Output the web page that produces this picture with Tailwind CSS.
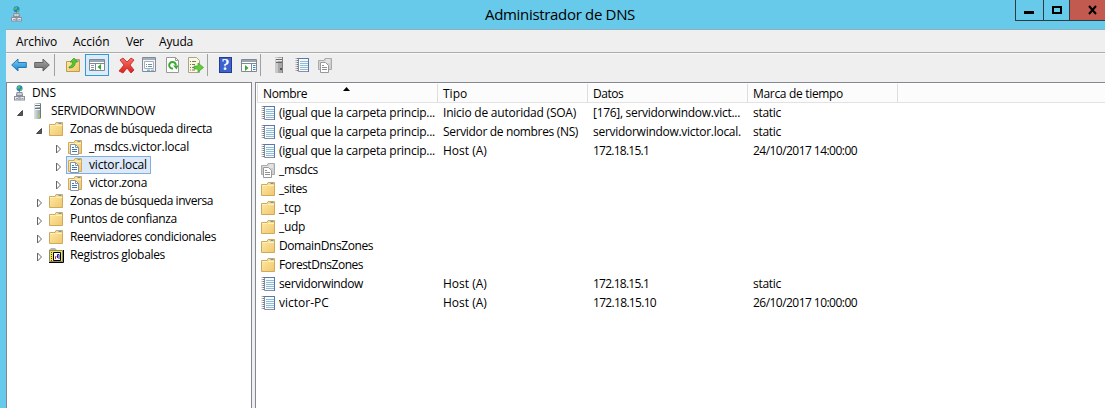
<!DOCTYPE html>
<html lang="es">
<head>
<meta charset="utf-8">
<title>Administrador de DNS</title>
<script src="https://cdn.jsdelivr.net/npm/@tailwindcss/browser@4"></script>
</head>
<body class="h-[408px] w-[1105px] overflow-hidden bg-[#67caea] font-['Open_Sans','Noto_Sans',sans-serif] text-xs text-black">
<svg class="absolute size-0">
  <defs>
    <linearGradient id="gold" x1="0" y1="0" x2="1" y2="1"><stop offset="0" stop-color="#ffeaa8"/><stop offset="1" stop-color="#efc76c"/></linearGradient>
    <linearGradient id="blue" x1="0" y1="0" x2="0" y2="1"><stop offset="0" stop-color="#7fd0f8"/><stop offset="1" stop-color="#1583cf"/></linearGradient>
    <linearGradient id="gray" x1="0" y1="0" x2="0" y2="1"><stop offset="0" stop-color="#a8a8a8"/><stop offset="1" stop-color="#686868"/></linearGradient>
    <linearGradient id="red" x1="0" y1="0" x2="0" y2="1"><stop offset="0" stop-color="#f8736a"/><stop offset="1" stop-color="#d81f1a"/></linearGradient>
    <linearGradient id="steel" x1="0" y1="0" x2="1" y2="0"><stop offset="0" stop-color="#dfe4e6"/><stop offset="1" stop-color="#8d999f"/></linearGradient>
  </defs>
  <symbol id="dns" viewBox="0 0 16 16">
    <path d="M6.500 6v6M3.500 11V9h6v2" fill="none" stroke="#888e98"/>
    <circle cx="6.500" cy="3.300" r="3" fill="#2a7fc4"/><path d="M4 2.500L6 .8l1.500.7-1 2-2 .5zM7 4.500l2.200-1.500-.4 2L7 6.200z" fill="#4fc850"/>
    <g fill="#e6e7ec" stroke="#8b909b"><rect x="4" y="7.500" width="5" height="3"/><rect x="1.500" y="11.500" width="4.500" height="3.500"/><rect x="7" y="11.500" width="4.500" height="3.500"/></g>
    <path d="M3 13.500h2M8.500 13.500h2M5.500 9h2" stroke="#9a9eaa"/>
  </symbol>
  <symbol id="server" viewBox="0 0 16 16">
    <path d="M4 1l1-1h6v15l-1 1H4z" fill="url(#steel)"/><path d="M10 1h1v14h-1z" fill="#6c777e"/>
    <path d="M5 2.500h5M5 5.500h5" stroke="#66737c"/><path d="M5 3.500h5M5 1.500h5M5 6.500h5" stroke="#f7f9fa"/><path d="M8 12h2v2H8z" fill="#8be32b"/>
  </symbol>
  <symbol id="server-gray" viewBox="0 0 16 16">
    <path d="M4 0h8v16H4z" fill="#a7a7a7"/><path d="M4 0h3v16H4z" fill="#c9c9c9"/><path d="M11 0h1v16h-1z" fill="#808080"/><path d="M5 2.500h6M5 5.500h6" stroke="#666"/><path d="M5 3.500h6M4 1.500h7" stroke="#eee"/><path d="M9 11h2v2H9z" fill="#555"/>
  </symbol>
  <symbol id="folder" viewBox="0 0 16 16">
    <path d="M1.500 3.500H7l1-2h6.500v13h-13z" fill="url(#gold)" stroke="#cfa95c"/><path d="M8.500 2.500h5" stroke="#f5dda0"/><path d="M10.500 2.500h3" stroke="#4d9fd6"/><path d="M8 4.500h6M2 4.500h5" stroke="#fff0bd"/>
  </symbol>
  <symbol id="sheet" viewBox="0 0 9 11">
    <path d="M.5.5h5l3 3v7h-8z" fill="#fff" stroke="#8795ab"/><path d="M5.500.5v3h3" fill="none" stroke="#8795ab"/><path d="M2 3.500h2M2 5.500h5M2 7.500h5" stroke="#3c78bb"/>
  </symbol>
  <symbol id="zone" viewBox="0 0 16 16">
    <use href="#folder" width="16" height="16"/><use href="#sheet" x="3" y="5" width="9" height="11"/>
  </symbol>
  <symbol id="zone-gray" viewBox="0 0 16 16">
    <path d="M1.500 3.500H7l1-2h6.500v11h-13z" fill="#d0d0d0" stroke="#aaa"/><path d="M9 3h4M3 5h10" stroke="#f4f4f4"/><path d="M3.500 5.500h5l3 3v7h-8z" fill="#fff" stroke="#999"/><path d="M5 8.500h2M5 10.500h5M5 12.500h5" stroke="#909090"/>
  </symbol>
  <symbol id="record" viewBox="0 0 16 16">
    <path d="M3.500 1.500h10v13h-10z" fill="#f6fafc" stroke="#8790a8"/><path d="M3 1.500h11M13.500 1v14" stroke="#5b76b0"/>
    <path d="M5 4.500h8M5 6.500h8M5 8.500h8M5 10.500h8M5 12.500h8" stroke="#8fbcd6"/><path d="M2.500 1v14" stroke="#77777d" stroke-width="2" stroke-dasharray="1 1"/><path d="M1 1v14" stroke="#b0b0b4" stroke-dasharray="1 1"/>
  </symbol>
  <symbol id="logs" viewBox="0 0 16 16">
    <path d="M1 3l2-2h4l2 2h6v12H1z" fill="#b5b5ad"/><path d="M1.500 14.500v-11h13v11z" fill="#f0e84a" stroke="#8a8a70"/><path d="M15.500 3v12.500H1" fill="none" stroke="#000"/>
    <path d="M3.500 5v9" stroke="#4a4610" stroke-dasharray="1 1"/><path d="M5.500 5.500h7v8h-7z" fill="#fff" stroke="#000"/><path d="M7.500 12V9.500h1" fill="none" stroke="#e22"/><path d="M9.500 11V7.500h1.500v4.500" fill="none" stroke="#1b22c4"/>
  </symbol>
  <symbol id="open" viewBox="0 0 10 10"><path d="M1.500 7.500h5v-5z" fill="#555" stroke="#333" stroke-width=".8"/></symbol>
  <symbol id="closed" viewBox="0 0 10 10"><path d="M2.500 1v8L6.500 5z" fill="#fff" stroke="#666"/></symbol>
  <symbol id="arrow" viewBox="0 0 16 14"><path d="M.7 7L7 1v3.500h8.300v5H7V13z" stroke-width="1" stroke-linejoin="round"/></symbol>
</svg>

<header class="flex h-[29px]">
  <svg class="mt-[6px] ml-[10px] size-4"><use href="#dns"/></svg>
  <h1 class="ml-[459px] w-[151px] pt-[3px] text-[15px] leading-[22px] tracking-[-0.32px] whitespace-nowrap">Administrador de DNS</h1>
  <div class="ml-[379px] flex h-[21px] flex-1 border-b border-l border-[#303c42]">
    <div class="flex w-[28px] border-r border-[#303c42]"><svg class="h-5 w-[27px]"><path d="M8 11h10v3H8z"/></svg></div>
    <div class="flex w-[26px] border-r border-[#303c42]"><svg class="h-5 w-[25px]" fill="none" stroke="#000" stroke-width="2"><path d="M9 7h8v6H9z"/></svg></div>
    <div class="flex flex-1 bg-[#c35a50]"><svg class="h-5 w-[34px]" fill="none" stroke="#000" stroke-width="2"><path d="M19 6l7 8M26 6l-7 8"/></svg></div>
  </div>
</header>

<div class="ml-[6px] h-[379px] bg-[#efefef]">
  <nav class="flex h-[24px] border-y border-t-[#8eb0bd] border-b-[#acacac] pt-[2px] pl-[10px] leading-[19px] whitespace-nowrap">
    <span class="w-[57px] tracking-[-0.12px]">Archivo</span><span class="w-[53px]">Acción</span><span class="w-[33px] tracking-[-0.5px]">Ver</span><span class="tracking-[-0.19px]">Ayuda</span>
  </nav>

  <div class="flex h-[29px] items-start border-t border-[#f8f8f8] pl-[5px]">
    <svg class="mt-[4px] h-[14px] w-4" fill="url(#blue)" stroke="#2877ae"><use href="#arrow"/></svg>
    <svg class="mt-[4px] ml-[7px] h-[14px] w-4 -scale-x-100" fill="url(#gray)" stroke="#626262"><use href="#arrow"/></svg>
    <i class="ml-[4px] h-[22px] w-px bg-[#a0a0a0]"></i>
    <svg class="mt-[3px] ml-[10px] size-4"><path d="M1.500 4.500H8l1-2h5.500v12h-13z" fill="url(#gold)" stroke="#c29b4f"/><path d="M10 4h4" stroke="#4aa0d8"/><path d="M4 10c3-1 3.500-3 3.500-5H5l4-4 3.500 4h-2.200c0 4-2 6-6.300 6z" fill="#54c832" stroke="#36941f" stroke-width=".7"/></svg>
    <div class="ml-[4px] flex h-[22px] w-6 items-center justify-center border border-[#3399dd] bg-[#dcebf8]"><svg class="size-4"><path d="M.5 2.500h15v11H.5z" fill="#fff" stroke="#7d8997"/><path d="M1 3h14v2H1z" fill="#9ba6b2"/><path d="M6.500 6v8M1 6.500h14" stroke="#7d8997"/><path d="M2 8.500h3M2 10.500h3M2 12.500h3" stroke="#8b97a5"/><path d="M12 7v6L8.500 10z" fill="#35a928"/></svg></div>
    <svg class="mt-[3px] ml-[9px] size-[17px]"><path d="M2 3l3-2 4 4 4-4 3 2-4 5 4 5-3 3-4-5-4 5-4-2 5-6z" fill="url(#red)" stroke="#c0211c" stroke-width=".8" stroke-linejoin="round"/></svg>
    <svg class="mt-[3px] ml-[6px] size-4"><path d="M1.500.5h13v14h-13z" fill="#f5f5f5" stroke="#7f8b99"/><path d="M2 2h12" stroke="#a5afba" stroke-width="2"/><path d="M3.500 4.500h9v7h-9z" fill="#fff" stroke="#a5afba"/><path d="M5 7.500h1M7 7.500h4M5 9.500h1M7 9.500h4" stroke="#7590a5"/><path d="M6 13.200h3" stroke="#2aa9e0"/><path d="M10 13.200h3" stroke="#999"/></svg>
    <svg class="mt-[3px] ml-[8px] size-4"><path d="M1.500.5h9l3 3v12h-12z" fill="#fff" stroke="#999"/><path d="M10.500.5v3h3" fill="none" stroke="#999"/><path d="M8 11.500A3.300 3.300 0 1 1 10.800 8.500" fill="none" stroke="#3aaa31" stroke-width="2"/><path d="M8 8.500h5.500L11.500 12.500z" fill="#3aaa31"/></svg>
    <svg class="mt-[3px] ml-[6px] h-4 w-[17px]"><path d="M1.500.5h8l3 3v12h-11z" fill="#fcf8e0" stroke="#aaa38b"/><path d="M3 4.500h1M5 4.500h4M3 7.500h1M5 7.500h3M3 10.500h1M5 10.500h2M3 13h1M5 13h3" stroke="#777"/><path d="M7 9h4V6l5.500 4.500L11 15v-3H7z" fill="#61cf3d" stroke="#3c9e27" stroke-width=".7"/></svg>
    <i class="ml-[3px] h-[22px] w-px bg-[#a0a0a0]"></i>
    <div class="mt-[3px] ml-[11px] h-4 w-[13px] border border-[#253c91] bg-[#3b62cf] text-center font-['Liberation_Serif',serif] text-[16px] leading-[14px] font-bold text-white">?</div>
    <svg class="mt-[3px] ml-[9px] size-4"><path d="M.5 2.500h15v12H.5z" fill="#fff" stroke="#7d8997"/><path d="M1 4h14" stroke="#9ba6b2" stroke-width="2"/><path d="M10.500 7v8M1 6.500h14" stroke="#7d8997"/><path d="M12 8.500h2.500M12 10.500h2.500M12 12.500h2.500" stroke="#3f83c3"/><path d="M4 8v6l3.500-3z" fill="#35a928"/></svg>
    <i class="ml-[3px] h-[22px] w-px bg-[#a0a0a0]"></i>
    <svg class="mt-[3px] ml-[10px] size-4"><use href="#server-gray"/></svg>
    <svg class="mt-[3px] ml-[8px] size-4"><use href="#record"/></svg>
    <svg class="mt-[3px] ml-[6px] size-4"><use href="#zone-gray"/></svg>
  </div>

  <main class="flex h-[326px]">
    <aside class="w-[246px] border-x border-t border-[#828790] bg-white pt-px leading-[18px] whitespace-nowrap">
      <div class="flex h-[18px] items-center pl-[6px]"><svg class="size-4"><use href="#dns"/></svg><span class="ml-[3px] tracking-[-0.1px]">DNS</span></div>
      <div class="flex h-[18px] items-center pl-[9px]"><svg class="mt-1 size-[10px]"><use href="#open"/></svg><svg class="ml-[4px] size-4"><use href="#server"/></svg><span class="ml-[5px] tracking-[-0.37px]">SERVIDORWINDOW</span></div>
      <div class="flex h-[18px] items-center pl-[28px]"><svg class="mt-1 size-[10px]"><use href="#open"/></svg><svg class="ml-[3px] size-4"><use href="#folder"/></svg><span class="ml-[6px] tracking-[-0.39px]">Zonas de búsqueda directa</span></div>
      <div class="flex h-[18px] items-center pl-[47px]"><svg class="mt-1 size-[10px]"><use href="#closed"/></svg><svg class="ml-[3px] size-4"><use href="#zone"/></svg><span class="ml-[6px] tracking-[-0.21px]">_msdcs.victor.local</span></div>
      <div class="flex h-[18px] items-center pl-[47px]"><svg class="mt-1 size-[10px]"><use href="#closed"/></svg><div class="ml-[2px] flex h-[18px] items-center border border-[#84acdd] bg-[#dce9f9] pr-[2px]"><svg class="size-4"><use href="#zone"/></svg><span class="ml-[6px] w-[59px] tracking-[-0.17px]">victor.local</span></div></div>
      <div class="flex h-[18px] items-center pl-[47px]"><svg class="mt-1 size-[10px]"><use href="#closed"/></svg><svg class="ml-[3px] size-4"><use href="#zone"/></svg><span class="ml-[6px] tracking-[-0.29px]">victor.zona</span></div>
      <div class="flex h-[18px] items-center pl-[28px]"><svg class="mt-1 size-[10px]"><use href="#closed"/></svg><svg class="ml-[3px] size-4"><use href="#folder"/></svg><span class="ml-[6px] tracking-[-0.42px]">Zonas de búsqueda inversa</span></div>
      <div class="flex h-[18px] items-center pl-[28px]"><svg class="mt-1 size-[10px]"><use href="#closed"/></svg><svg class="ml-[3px] size-4"><use href="#folder"/></svg><span class="ml-[6px] tracking-[-0.33px]">Puntos de confianza</span></div>
      <div class="flex h-[18px] items-center pl-[28px]"><svg class="mt-1 size-[10px]"><use href="#closed"/></svg><svg class="ml-[3px] size-4"><use href="#folder"/></svg><span class="ml-[6px] tracking-[-0.35px]">Reenviadores condicionales</span></div>
      <div class="flex h-[18px] items-center pl-[28px]"><svg class="mt-1 size-[10px]"><use href="#closed"/></svg><svg class="ml-[3px] size-4"><use href="#logs"/></svg><span class="ml-[6px] tracking-[-0.33px]">Registros globales</span></div>
    </aside>

    <section class="ml-[3px] flex-1 border-t border-l border-[#828790] bg-white pt-px pl-px whitespace-nowrap">
      <div class="relative grid h-[19px] grid-cols-[181px_150px_160px_150px_1fr] border-b border-[#e2e2e2] bg-[#fcfcfc] leading-[19px]">
        <span class="border-r border-l border-[#dedede] pl-[5px] tracking-[-0.39px]">Nombre</span><span class="border-r border-[#dedede] pl-[5px]">Tipo</span><span class="border-r border-[#dedede] pl-[5px] tracking-[-0.45px]">Datos</span><span class="border-r border-[#dedede] pl-[5px] tracking-[-0.32px]">Marca de tiempo</span><span></span>
        <svg class="absolute top-[3px] left-[86px] h-1 w-[7px]"><path d="M0 4l3.500-4L7 4z"/></svg>
      </div>
      <div class="grid grid-cols-[22px_164px_150px_160px_1fr] auto-rows-[19px] items-center leading-[19px]">
        <svg class="ml-1 size-4"><use href="#record"/></svg><span class="tracking-[-0.26px]">(igual que la carpeta princip...</span><span class="tracking-[-0.22px]">Inicio de autoridad (SOA)</span><span class="tracking-[-0.3px]">[176], servidorwindow.vict...</span><span class="tracking-[-0.29px]">static</span>
        <svg class="ml-1 size-4"><use href="#record"/></svg><span class="tracking-[-0.26px]">(igual que la carpeta princip...</span><span class="tracking-[-0.34px]">Servidor de nombres (NS)</span><span class="tracking-[-0.28px]">servidorwindow.victor.local.</span><span class="tracking-[-0.29px]">static</span>
        <svg class="ml-1 size-4"><use href="#record"/></svg><span class="tracking-[-0.26px]">(igual que la carpeta princip...</span><span>Host (A)</span><span class="tracking-[-0.76px]">172.18.15.1</span><span class="tracking-[-0.54px]">24/10/2017 14:00:00</span>
        <svg class="ml-[3px] size-4"><use href="#zone-gray"/></svg><span class="col-span-4 tracking-[-0.32px]">_msdcs</span>
        <svg class="ml-[3px] size-4"><use href="#folder"/></svg><span class="col-span-4 tracking-[-0.46px]">_sites</span>
        <svg class="ml-[3px] size-4"><use href="#folder"/></svg><span class="col-span-4 tracking-[-0.16px]">_tcp</span>
        <svg class="ml-[3px] size-4"><use href="#folder"/></svg><span class="col-span-4 tracking-[-0.32px]">_udp</span>
        <svg class="ml-[3px] size-4"><use href="#folder"/></svg><span class="col-span-4 tracking-[-0.41px]">DomainDnsZones</span>
        <svg class="ml-[3px] size-4"><use href="#folder"/></svg><span class="col-span-4 tracking-[-0.48px]">ForestDnsZones</span>
        <svg class="ml-1 size-4"><use href="#record"/></svg><span class="tracking-[-0.39px]">servidorwindow</span><span>Host (A)</span><span class="tracking-[-0.76px]">172.18.15.1</span><span class="tracking-[-0.29px]">static</span>
        <svg class="ml-1 size-4"><use href="#record"/></svg><span>victor-PC</span><span>Host (A)</span><span class="tracking-[-0.68px]">172.18.15.10</span><span class="tracking-[-0.54px]">26/10/2017 10:00:00</span>
      </div>
    </section>
  </main>
</div>
</body>
</html>
